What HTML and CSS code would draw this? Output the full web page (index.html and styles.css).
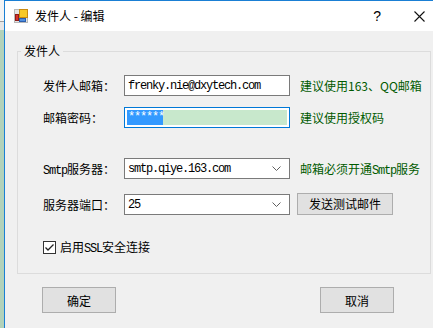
FILE: index.html
```html
<!DOCTYPE html>
<html lang="zh-CN">
<head>
  <meta charset="UTF-8">
  <title>发件人 - 编辑</title>
  <link rel="stylesheet" href="styles.css">
</head>
<body>
  <div class="desktop"></div>

  <div class="window">
    <div class="titlebar">
      <svg class="app-icon" width="14" height="14" viewBox="0 0 14 14">
        <rect x="0.5" y="0.5" width="13" height="13" fill="#e4e4e4" stroke="#b8b8b8"/>
        <rect x="5.5" y="0.5" width="8" height="8" fill="#f7c928" stroke="#c98a10"/>
        <rect x="1.5" y="5.5" width="3" height="6" fill="#d8302a" stroke="#8e1c18"/>
        <rect x="5.5" y="9.5" width="6" height="3" fill="#4f8fe0" stroke="#2a5fae"/>
      </svg>
      <span class="title">发件人 - 编辑</span>
      <span class="help">?</span>
      <svg class="close" width="11" height="11" viewBox="0 0 11 11">
        <path d="M0.5 0.5 L10.5 10.5 M10.5 0.5 L0.5 10.5" stroke="#111" stroke-width="1.1"/>
      </svg>
    </div>

    <fieldset class="group">
      <legend>发件人</legend>

      <div class="row first">
        <span class="label">发件人邮箱：</span>
        <div class="textbox mono">frenky.nie@dxytech.com</div>
        <span class="hint">建议使用163、QQ邮箱</span>
      </div>

      <div class="row gap-small">
        <span class="label">邮箱密码：</span>
        <div class="textbox focused">
          <div class="pwd-fill"><span class="selected mono">******</span></div>
        </div>
        <span class="hint">建议使用授权码</span>
      </div>

      <div class="row gap-large">
        <span class="label"><span class="mono">Smtp</span>服务器：</span>
        <div class="textbox combo">
          <span class="mono">smtp.qiye.163.com</span>
          <svg class="chevron" width="9" height="5" viewBox="0 0 9 5"><path d="M0.5 0.5 L4.5 4.5 L8.5 0.5" fill="none" stroke="#606060"/></svg>
        </div>
        <span class="hint">邮箱必须开通<span class="mono">Smtp</span>服务</span>
      </div>

      <div class="row gap-mid">
        <span class="label">服务器端口：</span>
        <div class="textbox combo">
          <span class="mono">25</span>
          <svg class="chevron" width="9" height="5" viewBox="0 0 9 5"><path d="M0.5 0.5 L4.5 4.5 L8.5 0.5" fill="none" stroke="#606060"/></svg>
        </div>
        <button class="btn test">发送测试邮件</button>
      </div>

      <div class="check-row">
        <span class="checkbox">
          <svg width="11" height="11" viewBox="0 0 11 11"><path d="M1.5 5.5 L4 8 L9.5 2.5" fill="none" stroke="#222" stroke-width="1.3"/></svg>
        </span>
        <span class="check-label">启用<span class="mono">SSL</span>安全连接</span>
      </div>
    </fieldset>

    <div class="actions">
      <button class="btn dialog">确定</button>
      <button class="btn dialog">取消</button>
    </div>
  </div>
</body>
</html>
```

FILE: styles.css
```css
body {
  margin: 0;
  height: 328px;
  overflow: hidden;
  display: flex;
  font-family: "Noto Sans CJK SC", sans-serif;
  font-size: 12px;
  color: #000;
  background-color: #f0f0f0;
}

.desktop {
  width: 4px;
  flex: none;
  background: linear-gradient(#f4f4f4 0, #f4f4f4 21px, #a0a0a0 21px, #a0a0a0 22px, #e6e6e6 22px, #e6e6e6 30px, #b2d2ba 30px);
}

.window {
  flex: 1;
  border-left: 1px solid #1a7fd4;
  border-top: 1px solid #1a7fd4;
  background-color: #f0f0f0;
}

.titlebar {
  height: 30px;
  background-color: #fff;
  display: flex;
  align-items: center;
}

.app-icon {
  margin-left: 9px;
}

.title {
  margin-left: 7px;
  font-size: 12px;
  line-height: 16px;
}

.help {
  margin-left: auto;
  font-family: "Liberation Sans", sans-serif;
  font-size: 14px;
}

.close {
  margin-left: 33px;
  margin-right: 8px;
}

.group {
  margin: 12px 2px 0 12px;
  padding: 0 0 18px 25px;
  border: 1px solid #dcdcdc;
}

.group legend {
  margin-left: -22px;
  padding: 0 3px;
  line-height: 16px;
}

.row {
  display: flex;
  align-items: center;
  height: 21px;
}

.row.first { margin-top: 16px; }
.row.gap-small { margin-top: 11px; }
.row.gap-large { margin-top: 30px; }
.row.gap-mid { margin-top: 15px; }

.label {
  width: 81px;
  flex: none;
}

.mono {
  font-family: "Liberation Mono", monospace;
  font-size: 12px;
  letter-spacing: -1.2px;
}

.textbox {
  width: 166px;
  height: 21px;
  box-sizing: border-box;
  border: 1px solid #7a7a7a;
  background-color: #fff;
  padding: 0 3px;
  display: flex;
  align-items: center;
  flex: none;
}

.textbox.focused {
  border-color: #0078d7;
  padding: 2px;
}

.pwd-fill {
  flex: 1;
  height: 100%;
  background-color: #c8e8cc;
  display: flex;
  align-items: center;
}

.selected {
  background-color: #3399ff;
  color: #fff;
  line-height: 15px;
  padding-left: 1px;
  width: 36px;
  box-sizing: border-box;
}

.combo .chevron {
  margin-left: auto;
  margin-right: 5px;
}

.hint {
  margin-left: 10px;
  color: #005a00;
  white-space: nowrap;
}

.btn {
  font-family: "Noto Sans CJK SC", sans-serif;
  font-size: 12px;
  background-color: #e1e1e1;
  border: 1px solid #adadad;
  padding: 0;
  color: #000;
}

.btn.test {
  margin-left: 7px;
  width: 96px;
  height: 22px;
  margin-top: -2px;
}

.check-row {
  display: flex;
  align-items: center;
  margin-top: 24px;
  height: 16px;
}

.checkbox {
  width: 13px;
  height: 13px;
  box-sizing: border-box;
  border: 1px solid #333;
  background-color: #fff;
  display: flex;
  align-items: center;
  justify-content: center;
}

.check-label {
  margin-left: 4px;
}

.actions {
  display: flex;
  justify-content: space-between;
  margin: 13px 39px 0 37px;
}

.btn.dialog {
  width: 74px;
  height: 26px;
}
```
